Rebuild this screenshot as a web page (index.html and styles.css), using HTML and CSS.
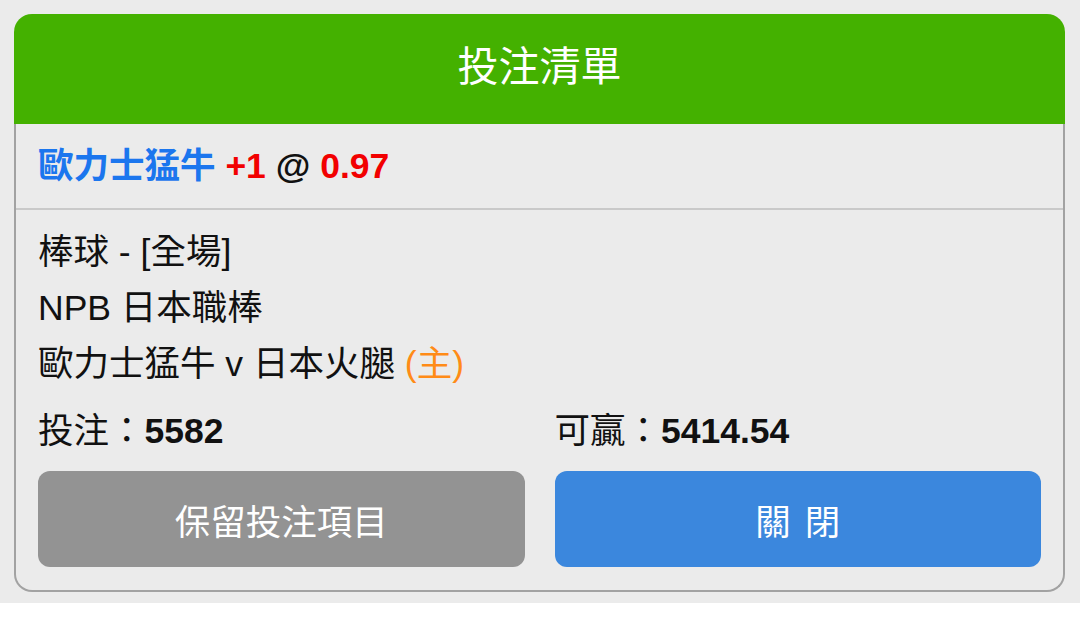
FILE: index.html
```html
<!DOCTYPE html>
<html lang="zh-Hant">
<head>
    <meta charset="UTF-8">
    <meta name="viewport" content="width=device-width, initial-scale=1.0">
    <title>投注清單</title>
    <link rel="stylesheet" href="styles.css">
</head>
<body>
    <div class="page">
        <div class="slip">
            <h1 class="slip-title">投注清單</h1>
            <div class="slip-body">
                <div class="pick">
                    <span class="team">歐力士猛牛</span>
                    <span class="red">+1</span>
                    <span>@</span>
                    <span class="red">0.97</span>
                </div>
                <div class="info">
                    <div>棒球 - [全場]</div>
                    <div>NPB 日本職棒</div>
                    <div>歐力士猛牛 v 日本火腿 <span class="home">(主)</span></div>
                    <div class="stakes">
                        <div>投注：<b>5582</b></div>
                        <div>可贏：<b>5414.54</b></div>
                    </div>
                    <div class="actions">
                        <button class="btn btn-keep">保留投注項目</button>
                        <button class="btn btn-close">關 閉</button>
                    </div>
                </div>
            </div>
        </div>
    </div>
</body>
</html>
```

FILE: styles.css
```css
body {
    font-family: "Liberation Sans", "Noto Sans CJK TC", sans-serif;
    background-color: #fff;
    margin: 0;
    padding: 0;
    color: #111;
}
.page {
    background-color: #ebebeb;
    padding: 14px 15px 11px 14px;
}
.slip {
    background: #ebebeb;
}
.slip-title {
    margin: 0;
    height: 110px;
    line-height: 107px;
    background-color: #44b100;
    color: white;
    font-size: 41px;
    font-weight: normal;
    text-align: center;
    border-radius: 18px 18px 0 0;
}
.slip-body {
    border: 2px solid #a2a2a2;
    border-top: none;
    border-radius: 0 0 18px 18px;
    padding-bottom: 23px;
}
.pick {
    height: 84px;
    line-height: 84px;
    padding: 0 22px;
    font-size: 35.5px;
    font-weight: bold;
    border-bottom: 2px solid #c9c9c9;
}
.team {
    color: #1b76ee;
}
.red {
    color: #f20000;
}
.info {
    padding: 14px 22px 0;
    font-size: 35.5px;
    line-height: 56px;
}
.home {
    color: #ff8b17;
}
.stakes {
    display: grid;
    grid-template-columns: 1fr 1fr;
    column-gap: 30px;
    margin-top: 11px;
}
.actions {
    display: grid;
    grid-template-columns: 1fr 1fr;
    column-gap: 30px;
    margin-top: 12px;
}
.btn {
    height: 96px;
    border: none;
    border-radius: 12px;
    color: white;
    font-family: inherit;
    font-size: 35.5px;
    cursor: pointer;
}
.btn-keep {
    background-color: #939393;
}
.btn-close {
    background-color: #3b87dd;
    word-spacing: 4px;
}
```
